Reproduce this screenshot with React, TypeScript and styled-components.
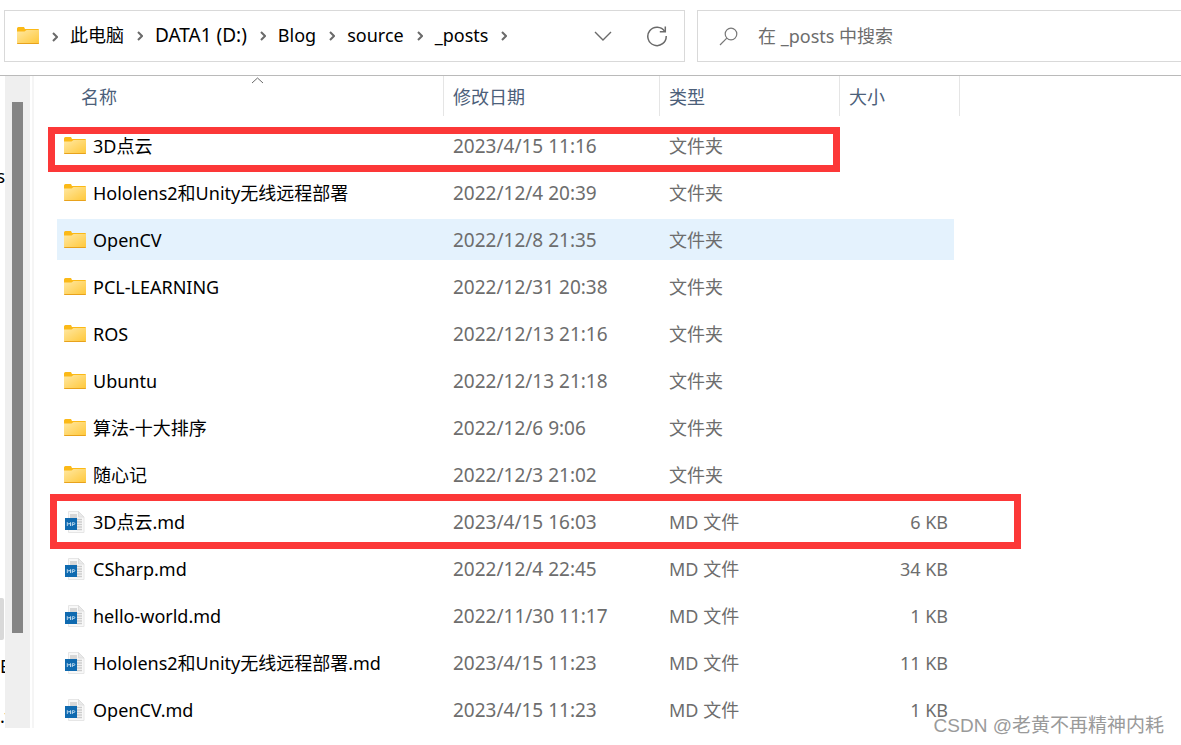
import React from "react";
import styled, { createGlobalStyle, css } from "styled-components";

const GlobalStyle = createGlobalStyle`
  *, *::before, *::after { box-sizing: border-box; }
  body {
    margin: 0;
    background: #fff;
    color: #000;
    font-family: "Noto Sans", "Noto Sans CJK SC", sans-serif;
    font-size: 18px;
    line-height: 24px;
  }
  button, input { font: inherit; color: inherit; }
`;

const Window = styled.div`
  position: relative;
  min-height: 100vh;
  overflow: hidden;
`;

const TopBar = styled.header`
  display: grid;
  grid-template-columns: 681fr 484fr;
  gap: 12px;
  padding: 10px 0 13px 4px;
  border-bottom: 1px solid #bababa;
`;

const AddressBar = styled.nav`
  display: flex;
  align-items: center;
  height: 52px;
  padding: 0 16px 0 12px;
  border: 1px solid #d9d9d9;
`;

const Crumbs = styled.ol`
  display: flex;
  align-items: center;
  flex: 1;
  margin: 0;
  padding: 0 0 2px;
  list-style: none;
`;

const Crumb = styled.li<{ $large?: boolean }>`
  display: flex;
  align-items: center;
  font-size: ${(p) => (p.$large ? "19px" : "18px")};
`;

const PlainButton = styled.button`
  display: flex;
  align-items: center;
  padding: 0;
  border: 0;
  background: none;
  white-space: nowrap;
`;

const CrumbChevron = styled.svg`
  width: 6px;
  height: 10px;
  margin: 2px 12px 0 13px;
  flex: none;
`;

const BarActions = styled.div`
  display: flex;
  align-items: center;
  gap: 34px;
`;

const SearchBox = styled.label`
  display: flex;
  align-items: center;
  gap: 20px;
  height: 52px;
  padding-left: 21px;
  border: 1px solid #d9d9d9;
  border-right: 0;
`;

const SearchInput = styled.input`
  flex: 1;
  min-width: 0;
  height: 28px;
  padding: 0;
  border: 0;
  outline: 0;
  background: none;
  &::placeholder { color: #6d6d6d; opacity: 1; }
`;

const Body = styled.div`
  display: flex;
`;

const TreeEdge = styled.aside`
  display: flex;
  flex-direction: column;
  width: 5px;
  height: 652px;
  padding-top: 88px;
  overflow: hidden;
  flex: none;
`;

const TreeSelection = styled.div`
  align-self: flex-end;
  width: 12px;
  height: 42px;
  margin: 410px 1px 14px 0;
  border-radius: 2px;
  background: #d9d9d9;
  flex: none;
`;

const TreeText = styled.span<{ $cut?: boolean }>`
  flex: none;
  margin-bottom: ${(p) => (p.$cut ? "26px" : "0")};
  align-self: ${(p) => (p.$cut ? "flex-start" : "flex-end")};
`;

const ScrollTrack = styled.div`
  display: flex;
  width: 25px;
  margin-bottom: 5px;
  padding: 26px 7px 95px;
  background: #efefef;
  flex: none;
`;

const ScrollThumb = styled.div`
  flex: 1;
  background: #858585;
`;

const Splitter = styled.div`
  width: 2px;
  margin: 0 23px 5px 2px;
  background: #f5f5f5;
  flex: none;
`;

const Pane = styled.main`
  flex: 1;
`;

const FileTable = styled.table`
  width: 903px;
  table-layout: fixed;
  border-collapse: separate;
  border-spacing: 0;
`;

const HeadCell = styled.th`
  position: relative;
  height: 46px;
  padding: 0 0 6px;
  font-weight: 400;
  text-align: left;
  vertical-align: top;
  color: #4c607a;
`;

const HeadButton = styled(PlainButton)<{ $first?: boolean; $last?: boolean }>`
  width: 100%;
  height: 40px;
  padding-top: 2px;
  padding-left: ${(p) => (p.$first ? "24px" : "9px")};
  border-left: ${(p) => (p.$first ? "0" : "1px solid #e5e5e5")};
  border-right: ${(p) => (p.$last ? "1px solid #e5e5e5" : "0")};
`;

const SortMark = styled.svg`
  position: absolute;
  top: 1px;
  left: 194px;
  width: 13px;
  height: 7px;
`;

const cell = css<{ $hover?: boolean }>`
  position: relative;
  height: 47px;
  border: 0 solid transparent;
  border-width: 3px 0;
  background: ${(p) => (p.$hover ? "#e4f2fd" : "none")};
  background-clip: padding-box;
  white-space: nowrap;
`;

const NameCell = styled.td<{ $hover?: boolean }>`
  ${cell}
  padding: 0 0 0 7px;
  border-radius: 2px 0 0 2px;
`;

const InfoCell = styled.td<{ $hover?: boolean; $large?: boolean }>`
  ${cell}
  padding: 0 0 0 10px;
  font-size: ${(p) => (p.$large ? "19px" : "18px")};
  color: #6d6d6d;
`;

const SizeCell = styled(InfoCell)`
  padding: 0 6px 0 0;
  border-right-width: 6px;
  text-align: right;
`;

const NameContent = styled.div`
  display: flex;
  align-items: center;
  gap: 7px;
`;

const Mark = styled.div<{ $file?: boolean }>`
  position: absolute;
  z-index: 1;
  border: 7px solid #fc3838;
  pointer-events: none;
  ${(p) =>
    p.$file
      ? "top: -7px; left: -7px; width: 971px; height: 55px;"
      : "top: 2px; left: -9px; width: 792px; height: 45px;"}
`;

const Watermark = styled.div`
  position: absolute;
  right: 17px;
  bottom: 7px;
  color: #9a9a9a;
  font-family: "Liberation Sans", "Noto Sans CJK SC", sans-serif;
  font-size: 19px;
`;

const FolderIcon = () => (
  <svg width="22" height="20" viewBox="1 0 22 20" aria-hidden="true">
    <defs>
      <linearGradient id="folder" x1="0" y1="0" x2="1" y2="1">
        <stop offset="0" stopColor="#ffe8a3" />
        <stop offset="1" stopColor="#ffc83a" />
      </linearGradient>
    </defs>
    <path d="M1 2.500Q1 1 2.500 1H8l1 2h13q1 0 1 1v3H1z" fill="#fbb917" />
    <path d="M1 5.500h7.500L10.500 4H23v13.500H1z" fill="url(#folder)" />
    <path d="M1 17h22v.6q0 .4-1 .4H2q-1 0-1-.4z" fill="#e8a21c" />
  </svg>
);

const MarkdownIcon = () => (
  <svg width="22" height="24" viewBox="1 0 22 24" aria-hidden="true">
    <path d="M5.500 1.500h10l5.500 5.500v15.500h-15.500z" fill="#f8f8f8" stroke="#e6e6e6" />
    <path d="M15.500 1.500v5.500H21z" fill="#e9e9e9" stroke="#dedede" />
    <path d="M7 5h7M7 7h7M14 9.500h5M14 12h5M14 14.500h5M14 17h5M14 19.500h5" stroke="#cccccc" strokeWidth="1.600" />
    <path d="M2 8h12v12H2z" fill="#0f6ab0" />
    <path d="M4.300 16v-3.500l1.600 1.800 1.600-1.800V16M9.300 16v-3.300h1.500q1 0 1 .9t-1 .9H9.300" fill="none" stroke="#b9d8ee" />
  </svg>
);

const Chevron = () => (
  <CrumbChevron viewBox="0 0 6 10" aria-hidden="true">
    <path d="M1 1l4 4-4 4" fill="none" stroke="#6a6a6a" strokeWidth="2" />
  </CrumbChevron>
);

const crumbs = [
  { name: "此电脑" },
  { name: "DATA1 (D:)", drive: true },
  { name: "Blog" },
  { name: "source" },
  { name: "_posts" },
];

type Entry = { name: string; date: string; size?: string; hover?: boolean; marked?: boolean };

const entries: Entry[] = [
  { name: "3D点云", date: "2023/4/15 11:16", marked: true },
  { name: "Hololens2和Unity无线远程部署", date: "2022/12/4 20:39" },
  { name: "OpenCV", date: "2022/12/8 21:35", hover: true },
  { name: "PCL-LEARNING", date: "2022/12/31 20:38" },
  { name: "ROS", date: "2022/12/13 21:16" },
  { name: "Ubuntu", date: "2022/12/13 21:18" },
  { name: "算法-十大排序", date: "2022/12/6 9:06" },
  { name: "随心记", date: "2022/12/3 21:02" },
  { name: "3D点云.md", date: "2023/4/15 16:03", size: "6 KB", marked: true },
  { name: "CSharp.md", date: "2022/12/4 22:45", size: "34 KB" },
  { name: "hello-world.md", date: "2022/11/30 11:17", size: "1 KB" },
  { name: "Hololens2和Unity无线远程部署.md", date: "2023/4/15 11:23", size: "11 KB" },
  { name: "OpenCV.md", date: "2023/4/15 11:23", size: "1 KB" },
];

const NameCol = styled.col`
  width: 386px;
`;

const DateCol = styled.col`
  width: 216px;
`;

const TypeCol = styled.col`
  width: 180px;
`;

export default function App() {
  return (
    <Window>
      <GlobalStyle />
      <TopBar>
        <AddressBar aria-label="地址">
          <FolderIcon />
          <Chevron />
          <Crumbs>
            {crumbs.map(({ name, drive }) => (
              <Crumb key={name} $large={drive}>
                <PlainButton type="button">{name}</PlainButton>
                <Chevron />
              </Crumb>
            ))}
          </Crumbs>
          <BarActions>
            <PlainButton type="button" aria-label="展开">
              <svg width="18" height="10" viewBox="0 0 18 10">
                <path d="M1 1l8 8 8-8" fill="none" stroke="#6a6a6a" strokeWidth="1.400" />
              </svg>
            </PlainButton>
            <PlainButton type="button" aria-label="刷新">
              <svg width="22" height="22" viewBox="0 0 22 22">
                <path d="M18.800 6.500A9.200 9.200 0 1 0 20.200 11" fill="none" stroke="#6a6a6a" strokeWidth="1.500" />
                <path d="M19.300 1.500v5.300h-5.500" fill="none" stroke="#6a6a6a" strokeWidth="1.500" />
              </svg>
            </PlainButton>
          </BarActions>
        </AddressBar>
        <SearchBox>
          <svg width="19" height="19" viewBox="0 0 19 19" aria-hidden="true">
            <circle cx="12" cy="7" r="5.800" fill="none" stroke="#777" strokeWidth="1.200" />
            <path d="M7.800 11.200L1 18" stroke="#777" strokeWidth="1.200" />
          </svg>
          <SearchInput type="text" aria-label="搜索" placeholder="在 _posts 中搜索" />
        </SearchBox>
      </TopBar>
      <Body>
        <TreeEdge>
          <TreeText>s</TreeText>
          <TreeSelection />
          <TreeText $cut>E</TreeText>
          <TreeText $cut>.v</TreeText>
        </TreeEdge>
        <ScrollTrack>
          <ScrollThumb />
        </ScrollTrack>
        <Splitter />
        <Pane>
          <FileTable>
            <colgroup>
              <NameCol />
              <DateCol />
              <TypeCol />
              <col />
            </colgroup>
            <thead>
              <tr>
                <HeadCell scope="col" aria-sort="ascending">
                  <HeadButton type="button" $first>名称</HeadButton>
                  <SortMark viewBox="0 0 13 7" aria-hidden="true">
                    <path d="M1 6l5.500-5L12 6" fill="none" stroke="#6a6a6a" />
                  </SortMark>
                </HeadCell>
                <HeadCell scope="col"><HeadButton type="button">修改日期</HeadButton></HeadCell>
                <HeadCell scope="col"><HeadButton type="button">类型</HeadButton></HeadCell>
                <HeadCell scope="col"><HeadButton type="button" $last>大小</HeadButton></HeadCell>
              </tr>
            </thead>
            <tbody>
              {entries.map(({ name, date, size, hover, marked }) => (
                <tr key={name}>
                  <NameCell $hover={hover}>
                    <NameContent>
                      {size ? <MarkdownIcon /> : <FolderIcon />}
                      {name}
                    </NameContent>
                    {marked && <Mark $file={!!size} />}
                  </NameCell>
                  <InfoCell $hover={hover} $large>{date}</InfoCell>
                  <InfoCell $hover={hover}>{size ? "MD 文件" : "文件夹"}</InfoCell>
                  <SizeCell $hover={hover}>{size}</SizeCell>
                </tr>
              ))}
            </tbody>
          </FileTable>
        </Pane>
      </Body>
      <Watermark>CSDN @老黄不再精神内耗</Watermark>
    </Window>
  );
}
